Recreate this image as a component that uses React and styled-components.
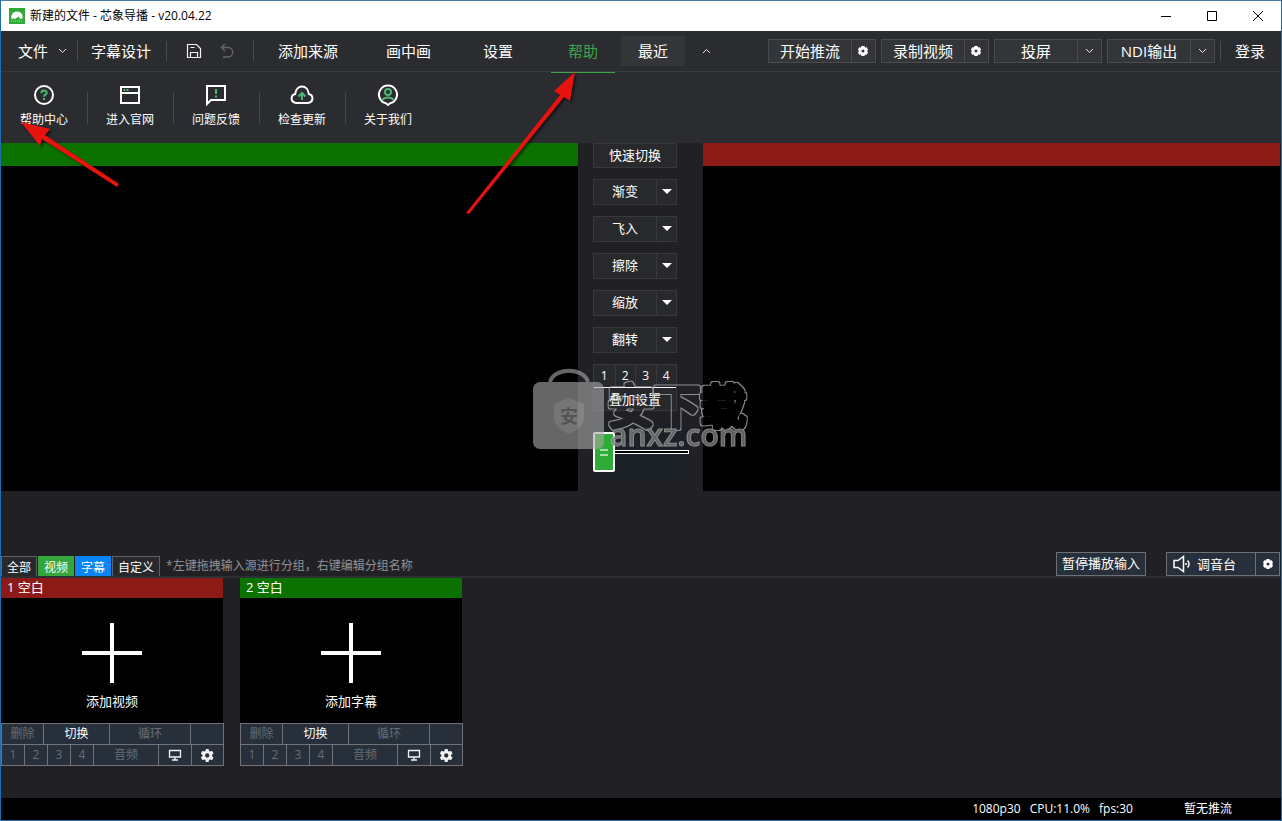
import React, { useState } from 'react';
import styled, { createGlobalStyle, css } from 'styled-components';

const GlobalStyle = createGlobalStyle`
    * {
        box-sizing: border-box;
    }

    body {
        margin: 0;
        background: #212125;
        color: #fff;
        font-family: "Open Sans", "Noto Sans CJK SC", sans-serif;
        font-size: 13px;
        line-height: 16px;
    }

    button {
        padding: 0;
        border: 0;
        background: none;
        color: inherit;
        font: inherit;
        white-space: nowrap;
    }

    svg {
        display: block;
    }
`;

const Window = styled.div`
    position: relative;
    display: flex;
    flex-direction: column;
    min-height: 100vh;
    border: 1px solid #1f6fb0;
    border-top-color: #4a7ba3;
    background: #212125;
`;

/* title bar */

const TitleBar = styled.header`
    display: flex;
    align-items: center;
    height: 30px;
    padding-left: 8px;
    background: #fff;
    color: #000;
`;

const Title = styled.h1`
    flex: 1;
    margin: 0 0 0 5px;
    font-size: 12px;
    font-weight: 400;
`;

const WindowButton = styled.button`
    display: flex;
    align-items: center;
    justify-content: center;
    width: 46px;
    height: 30px;
`;

/* menu */

const MenuBar = styled.nav`
    display: flex;
    align-items: center;
    height: 41px;
    padding: 0 16px 0 17px;
    border-bottom: 1px solid #3a3b3f;
    background: #2b2c30;
    font-size: 15px;
    line-height: 20px;
`;

const MenuButton = styled.button`
    display: flex;
    align-items: center;
    gap: 10px;
`;

const MenuDivider = styled.span`
    width: 1px;
    height: 20px;
    margin: 0 ${props => props.$after}px 0 ${props => props.$before}px;
    background: #4a4b4f;
`;

const IconButton = styled.button`
    display: flex;
    align-items: center;
    justify-content: center;
    width: 16px;
    height: 30px;
    margin: 0 ${props => props.$after || 0}px 0 ${props => props.$before || 0}px;
`;

const Tab = styled.button`
    height: 30px;
    margin-left: ${props => props.$lead}px;
    padding: 0 17px;

    ${props => props.$recent && css`
        background: #343539;
    `}

    ${props => props.$active && css`
        position: relative;
        height: 42px;
        margin-bottom: -2px;
        padding-bottom: 2px;
        border-bottom: 1px solid #3aa646;
        color: #3aa646;
    `}
`;

const OutputGroup = styled.div`
    display: flex;
    gap: 5px;
    margin-left: auto;
`;

const SplitButton = styled.div`
    display: flex;
    width: 108px;
    height: 24px;
    border: 1px solid #4a4b50;
    background: #343539;
`;

const SplitMain = styled.button`
    flex: 1;
`;

const SplitSide = styled.button`
    display: flex;
    align-items: center;
    justify-content: center;
    width: ${props => props.$width || 24}px;
    border-left: 1px solid ${props => props.$line || '#4a4b50'};
`;

/* help ribbon */

const Ribbon = styled.div`
    display: flex;
    align-items: flex-start;
    height: 71px;
    padding-top: 11px;
    background: #2b2c30;
`;

const RibbonButton = styled.button`
    display: flex;
    flex-direction: column;
    align-items: center;
    gap: 5px;
    width: 86px;
    font-size: 12px;
`;

const RibbonDivider = styled.span`
    width: 1px;
    height: 32px;
    margin: 9px -1px 0 0;
    background: #46474b;
`;

/* monitors */

const Stage = styled.main`
    position: relative;
    display: grid;
    grid-template-columns: 1fr 125px 1fr;
    padding-right: 1px;
`;

const Monitor = styled.section`
    border-top: 23px solid ${props => props.$color};
    background: #000;
`;

const MixColumn = styled.div`
    display: flex;
    flex-direction: column;
    gap: 11px;
    min-height: 348px;
    padding-left: 15px;
`;

const QuickButton = styled.button`
    width: 84px;
    height: 25px;
    padding-bottom: 2px;
    border: 1px solid #37393d;
    background: #27292d;
`;

const EffectButton = styled.div`
    display: flex;
    width: 84px;
    height: 26px;
    border: 1px solid #37393d;
    background: #27292d;

    button {
        padding-bottom: 2px;
    }
`;

const Caret = styled.span`
    border: 5px solid transparent;
    border-top-color: #fff;
    border-bottom: 0;
`;

const Overlay = styled.div`
    width: 84px;
    border: 1px solid #37393d;
    background: #27292d;
`;

const OverlayNumbers = styled.div`
    display: grid;
    grid-template-columns: repeat(4, 1fr);
    height: 23px;
    border-bottom: 1px solid #fff;
    font-size: 12px;

    button + button {
        border-left: 1px solid #37393d;
    }
`;

const OverlayButton = styled.button`
    width: 100%;
    height: 22px;
    padding-bottom: 1px;
`;

const Fader = styled.input`
    appearance: none;
    width: 96px;
    height: 60px;
    margin: 0;
    background: #1c2027;

    &::-webkit-slider-runnable-track {
        height: 4px;
        border: 1px solid #fff;
        background: #000;
    }

    &::-webkit-slider-thumb {
        appearance: none;
        width: 22px;
        height: 40px;
        margin-top: -19px;
        margin-left: -1px;
        border: 2px solid #fff;
        border-radius: 2px;
        background:
            linear-gradient(#a5dca9, #a5dca9) 50% 15px / 8px 2px no-repeat,
            linear-gradient(#a5dca9, #a5dca9) 50% 20px / 8px 2px no-repeat,
            #2fac37;
    }
`;

const Watermark = styled.svg`
    position: absolute;
    top: 225px;
    left: calc(50% - 108px);
    overflow: visible;
    pointer-events: none;
`;

const Arrows = styled.svg`
    position: absolute;
    top: -1px;
    left: -1px;
    filter: drop-shadow(2px 2px 1px rgba(0, 0, 0, 0.5));
    pointer-events: none;
`;

/* inputs */

const SourceBar = styled.div`
    display: flex;
    align-items: flex-end;
    height: 87px;
    border-bottom: 2px solid #2d2f35;
`;

const GroupTab = styled.button`
    height: 20px;
    margin-right: 1px;
    padding: 2px 5px 0 5px;
    border: 1px solid ${props => props.$color || '#626265'};
    border-bottom: 0;
    background: ${props => props.$color || '#27292d'};
    font-size: 12px;
`;

const Hint = styled.p`
    flex: 1;
    margin: 0 0 2px 5px;
    color: #929295;
    font-size: 12px;
`;

const AudioButton = styled.button`
    height: 24px;
    padding: 0 5px 2px 5px;
    border: 1px solid #6d7075;
    background: #27303a;
`;

const AudioMixer = styled.div`
    display: flex;
    width: 114px;
    height: 24px;
    margin: 0 1px 0 20px;
    border: 1px solid #6d7075;
    background: #27303a;
`;

const MixerMain = styled.button`
    display: flex;
    flex: 1;
    align-items: center;
    gap: 6px;
    padding-left: 6px;
`;

const Sources = styled.section`
    display: flex;
    flex: 1;
    gap: 16px;
    align-items: flex-start;
`;

const Card = styled.article`
    width: 223px;
`;

const CardTitle = styled.h2`
    height: 20px;
    margin: 0 1px 0 0;
    padding: 1px 6px;
    background: ${props => props.$color};
    font-size: 13px;
    font-weight: 400;
`;

const AddButton = styled.button`
    display: flex;
    flex-direction: column;
    align-items: center;
    gap: 10px;
    width: 222px;
    height: 125px;
    padding-top: 25px;
    background: #000;
`;

const ControlRow = styled.div`
    display: grid;
    grid-template-columns: ${props => props.$columns};
    gap: 1px;
    padding: 1px 1px 0 1px;
    background: #707275;

    &:last-child {
        padding-bottom: 1px;
    }
`;

const ControlButton = styled.button`
    display: flex;
    align-items: center;
    justify-content: center;
    height: 20px;
    background: #27303a;
    color: #fff;
    font-size: 12px;

    &:disabled {
        color: #666d75;
    }
`;

const StatusBar = styled.footer`
    display: flex;
    align-items: center;
    justify-content: flex-end;
    gap: 9px;
    height: 22px;
    padding-right: 49px;
    background: #000;
    font-size: 12px;
`;

const StreamState = styled.span`
    margin-left: 42px;
`;

const Logo = () => (
    <svg width="16" height="16" viewBox="0 0 16 16">
        <rect width="16" height="16" fill="#2faa36" />
        <path d="M2.500 11c-.8-4 1.500-7.500 5.500-7.500 4.200 0 6.500 3.500 5.500 7.500l-1.500-.5-1 .5-1.500-2.500-2 1.500-1.500 1-1.500-.5z" fill="#fff" />
        <path d="M2 13h12" stroke="#b5e2b8" strokeDasharray="1 1" />
    </svg>
);

const Chevron = ({ up }) => (
    <svg width="9" height="6" viewBox="0 0 9 6" fill="none" stroke="#e8e8e8">
        <path d={up ? 'M1 5l3.500-3.500 3.500 3.500' : 'M1 1l3.500 3.500 3.500-3.500'} />
    </svg>
);

const NutIcon = () => (
    <svg width="10" height="10" viewBox="0 0 10 10">
        <path
            fillRule="evenodd"
            fill="#fff"
            d="M3.500 0h3l.6 1.400 1.700-.2L10 3.800 9.100 5l.9 1.200-1.200 2.600-1.700-.2L6.500 10h-3l-.6-1.400-1.700.2L0 6.200.9 5 0 3.800l1.200-2.600 1.700.2zM5 3.500a1.500 1.500 0 1 0 0 3 1.500 1.500 0 0 0 0-3z"
        />
    </svg>
);

const GearIcon = () => (
    <svg width="13" height="13" viewBox="0 0 24 24" fill="#f2f2f2">
        <path d="M20.300 13.200c.1-.4.1-.8.1-1.200s0-.8-.1-1.200l2.600-2a.7.7 0 0 0 .1-.8l-2.400-4.200a.7.7 0 0 0-.8-.3l-3 1.200a9 9 0 0 0-2.100-1.200L14.200.6a.6.6 0 0 0-.6-.6H9.400a.6.6 0 0 0-.6.6l-.5 2.900a9 9 0 0 0-2.100 1.200l-3-1.200a.7.7 0 0 0-.8.300L0 8a.6.6 0 0 0 .1.800l2.600 2a9 9 0 0 0 0 2.400l-2.600 2a.7.7 0 0 0-.1.800l2.400 4.200c.2.300.5.4.8.3l3-1.200a9 9 0 0 0 2.100 1.200l.5 2.900c0 .3.300.6.600.6h4.200c.3 0 .6-.3.6-.6l.5-2.900a9 9 0 0 0 2.100-1.200l3 1.200c.3.100.6 0 .8-.3L23 16a.6.6 0 0 0-.1-.8zM11.500 16a4 4 0 1 1 0-8 4 4 0 0 1 0 8z" fillRule="evenodd" />
    </svg>
);

const ScreenIcon = () => (
    <svg width="14" height="12" viewBox="0 0 14 12" fill="none" stroke="#f2f2f2">
        <path d="M1.500 1.500h11v6.500h-11zM7 8v3M4 11h6" strokeWidth="1.300" />
    </svg>
);

const SpeakerIcon = () => (
    <svg width="18" height="18" viewBox="0 0 18 18" fill="none" stroke="#fff" strokeWidth="1.500">
        <path d="M1 5.500h4L10.500 1.500v15L5 12.500H1z" />
        <path d="M13 8v2M14.500 5.500c2 2 2 5 0 7" />
    </svg>
);

const SaveIcon = () => (
    <svg width="16" height="16" viewBox="0 0 16 16" fill="none" stroke="#f2f2f2" strokeWidth="1.200">
        <path d="M1.500 1.500h9l4 4v9h-13zM4.500 14v-4.500h7V14M4.500 4.500h4" />
    </svg>
);

const UndoIcon = () => (
    <svg width="14" height="16" viewBox="0 0 14 16" fill="none" stroke="#66676b" strokeWidth="1.400">
        <path d="M5 1L1.500 4.500 5 8M1.500 4.500h6.500a4.700 4.700 0 0 1 0 9.500H3" />
    </svg>
);

const Glyph = ({ children }) => (
    <svg width="24" height="24" viewBox="0 0 24 24" fill="none" stroke="#fff" strokeWidth="2">
        {children}
    </svg>
);

const green = '#4fb573';

const ribbonItems = [
    {
        label: '帮助中心',
        icon: (
            <Glyph>
                <circle cx="12" cy="12" r="9" />
                <path d="M9.300 10.300c0-3.600 5.400-3.500 5.400-.4 0 1.800-2.700 1.800-2.700 3.800M12 15v2" stroke={green} />
            </Glyph>
        ),
    },
    {
        label: '进入官网',
        icon: (
            <Glyph>
                <path d="M3 4h18v16H3zM3 10h18" />
                <path d="M5.500 7h2M8.500 7h2" stroke={green} />
            </Glyph>
        ),
    },
    {
        label: '问题反馈',
        icon: (
            <Glyph>
                <path d="M3 3h18v14H7l-4 4z" />
                <path d="M12 6v5M12 12.500v2" stroke={green} />
            </Glyph>
        ),
    },
    {
        label: '检查更新',
        icon: (
            <Glyph>
                <path d="M6 20c-6-1-5.500-8-.8-9C6 1 18 1 18.800 11c4.700 1 5.200 8-.8 9z" />
                <path d="M12 17V11M8.500 13.500L12 10l3.500 3.500" stroke={green} />
            </Glyph>
        ),
    },
    {
        label: '关于我们',
        icon: (
            <Glyph>
                <path d="M10 20.300a9 9 0 1 1 4 0L12 22z" />
                <circle cx="12" cy="9" r="3" stroke={green} />
                <path d="M6 17c3-3.500 9-3.500 12 0" stroke={green} />
            </Glyph>
        ),
    },
];

const outputs = [
    { label: '开始推流', side: '推流设置', icon: <NutIcon /> },
    { label: '录制视频', side: '录制设置', icon: <NutIcon /> },
    { label: '投屏', side: '选择屏幕', icon: <Chevron /> },
    { label: 'NDI输出', side: 'NDI选项', icon: <Chevron /> },
];

const effects = ['渐变', '飞入', '擦除', '缩放', '翻转'];

const SourceCard = ({ title, color, action }) => (
    <Card>
        <CardTitle $color={color}>{title}</CardTitle>
        <AddButton>
            <svg width="60" height="60" viewBox="0 0 60 60" stroke="#fff" strokeWidth="4">
                <path d="M30 0v60M0 30h60" />
            </svg>
            {action}
        </AddButton>
        <ControlRow $columns="41px 65px 80px 1fr">
            <ControlButton disabled>删除</ControlButton>
            <ControlButton>切换</ControlButton>
            <ControlButton disabled>循环</ControlButton>
            <ControlButton disabled aria-label="空" />
        </ControlRow>
        <ControlRow $columns="repeat(4, 22px) 64px 32px 1fr">
            {[1, 2, 3, 4].map(n => (
                <ControlButton key={n} disabled>{n}</ControlButton>
            ))}
            <ControlButton disabled>音频</ControlButton>
            <ControlButton aria-label="投屏"><ScreenIcon /></ControlButton>
            <ControlButton aria-label="设置"><GearIcon /></ControlButton>
        </ControlRow>
    </Card>
);

const App = () => {
    const [mix, setMix] = useState(0);

    return (
        <>
            <GlobalStyle />
            <Window>
                <TitleBar>
                    <Logo />
                    <Title>新建的文件 - 芯象导播 - v20.04.22</Title>
                    <WindowButton aria-label="最小化">
                        <svg width="10" height="10" stroke="#000"><path d="M0 5.500h10" /></svg>
                    </WindowButton>
                    <WindowButton aria-label="最大化">
                        <svg width="10" height="10" stroke="#000" fill="none"><path d="M.5.5h9v9h-9z" /></svg>
                    </WindowButton>
                    <WindowButton aria-label="关闭">
                        <svg width="10" height="10" stroke="#000"><path d="M0 0l10 10M10 0L0 10" /></svg>
                    </WindowButton>
                </TitleBar>

                <MenuBar>
                    <MenuButton>文件 <Chevron /></MenuButton>
                    <MenuDivider $before={10} $after={13} />
                    <MenuButton>字幕设计</MenuButton>
                    <MenuDivider $before={15} $after={19} />
                    <IconButton aria-label="保存" $after={17}><SaveIcon /></IconButton>
                    <IconButton aria-label="撤销" $after={18}><UndoIcon /></IconButton>
                    <MenuDivider $before={0} $after={0} />
                    <Tab $lead={7}>添加来源</Tab>
                    <Tab $lead={14}>画中画</Tab>
                    <Tab $lead={18}>设置</Tab>
                    <Tab $lead={21} $active>帮助</Tab>
                    <Tab $lead={6} $recent>最近</Tab>
                    <IconButton aria-label="收起" $before={13}><Chevron up /></IconButton>
                    <OutputGroup>
                        {outputs.map(item => (
                            <SplitButton key={item.label}>
                                <SplitMain>{item.label}</SplitMain>
                                <SplitSide aria-label={item.side}>{item.icon}</SplitSide>
                            </SplitButton>
                        ))}
                    </OutputGroup>
                    <MenuDivider $before={5} $after={14} />
                    <MenuButton>登录</MenuButton>
                </MenuBar>

                <Ribbon>
                    {ribbonItems.map((item, i) => (
                        <React.Fragment key={item.label}>
                            {i > 0 && <RibbonDivider />}
                            <RibbonButton>
                                {item.icon}
                                {item.label}
                            </RibbonButton>
                        </React.Fragment>
                    ))}
                </Ribbon>

                <Stage>
                    <Monitor $color="#0b7200" aria-label="预览" />
                    <MixColumn>
                        <QuickButton>快速切换</QuickButton>
                        {effects.map(name => (
                            <EffectButton key={name}>
                                <SplitMain>{name}</SplitMain>
                                <SplitSide aria-label={`${name}选项`} $width={20} $line="#37393d">
                                    <Caret />
                                </SplitSide>
                            </EffectButton>
                        ))}
                        <Overlay>
                            <OverlayNumbers>
                                {[1, 2, 3, 4].map(n => <button key={n}>{n}</button>)}
                            </OverlayNumbers>
                            <OverlayButton>叠加设置</OverlayButton>
                        </Overlay>
                        <Fader
                            type="range"
                            aria-label="手动切换"
                            value={mix}
                            onChange={e => setMix(Number(e.target.value))}
                        />
                    </MixColumn>
                    <Monitor $color="#8c1a17" aria-label="输出" />

                    <Watermark width="220" height="90" viewBox="0 0 220 90">
                        <defs>
                            <filter id="ring" x="-5%" y="-5%" width="110%" height="110%">
                                <feMorphology in="SourceGraphic" operator="dilate" radius="1" result="outer" />
                                <feComposite in="outer" in2="SourceGraphic" operator="out" />
                            </filter>
                        </defs>
                        <g opacity="0.600">
                            <path d="M17 14c4-15 34-15 38 0" fill="none" stroke="#aaa" strokeWidth="4" />
                            <rect x="0" y="14" width="71" height="67" rx="7" fill="#aaa" />
                            <path d="M36 30l15 6v13c0 8-6 13-15 17-9-4-15-9-15-17V36z" fill="#c4c4c4" />
                            <text x="36" y="55" fontSize="18" fontWeight="700" textAnchor="middle" fill="#8a8a8a">安</text>
                        </g>
                        <g opacity="0.800">
                            <text
                                x="75"
                                y="55"
                                fontSize="46"
                                fontWeight="400"
                                fill="#a8a8a8"
                                stroke="#a8a8a8"
                                strokeWidth="5"
                                strokeLinejoin="round"
                                filter="url(#ring)"
                            >
                                安下载
                            </text>
                            <text x="77" y="78" fontSize="30" fontWeight="600" fill="#777" stroke="#a8a8a8" strokeWidth="1">anxz.com</text>
                        </g>
                    </Watermark>
                </Stage>

                <SourceBar>
                    <GroupTab>全部</GroupTab>
                    <GroupTab $color="#33a63c">视频</GroupTab>
                    <GroupTab $color="#0a84f5">字幕</GroupTab>
                    <GroupTab>自定义</GroupTab>
                    <Hint>*左键拖拽输入源进行分组，右键编辑分组名称</Hint>
                    <AudioButton>暂停播放输入</AudioButton>
                    <AudioMixer>
                        <MixerMain><SpeakerIcon />调音台</MixerMain>
                        <SplitSide aria-label="调音台设置" $line="#6d7075"><NutIcon /></SplitSide>
                    </AudioMixer>
                </SourceBar>

                <Sources>
                    <SourceCard title="1 空白" color="#8c1a17" action="添加视频" />
                    <SourceCard title="2 空白" color="#0b7200" action="添加字幕" />
                </Sources>

                <StatusBar>
                    <span>1080p30</span>
                    <span>CPU:11.0%</span>
                    <span>fps:30</span>
                    <StreamState>暂无推流</StreamState>
                </StatusBar>

                <Arrows width="620" height="220" viewBox="0 0 620 220" fill="#e8120e">
                    <path d="M21 122l29 7-5 6 74 49-2 3-75-48-2 7z" />
                    <path d="M575 72l-5 29-6-4-95 117-3-1 94-118-6-4z" />
                </Arrows>
            </Window>
        </>
    );
};

export default App;
